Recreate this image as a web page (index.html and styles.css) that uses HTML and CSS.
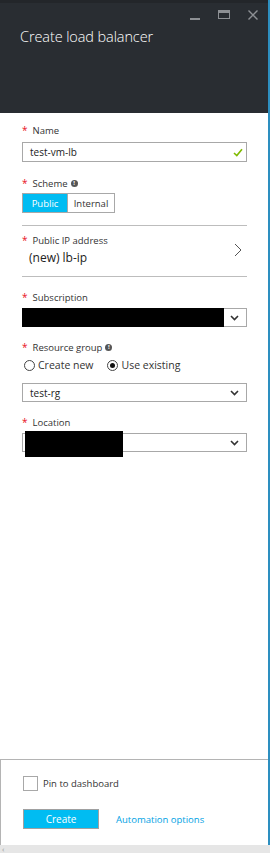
FILE: index.html
```html
<!DOCTYPE html>
<html>
<head>
<meta charset="utf-8">
<link rel="stylesheet" href="styles.css">
</head>
<body>
<div class="frame">
  <div class="panel">
    <div class="header">
      <div class="controls">
        <svg class="ctl" width="12" height="12" viewBox="0 0 12 12"><rect x="1" y="9" width="10" height="2" fill="#8d9094"/></svg>
        <svg class="ctl" width="12" height="12" viewBox="0 0 12 12"><rect x="0.5" y="1.5" width="11" height="8" fill="none" stroke="#8d9094"/><rect x="1" y="2" width="10" height="2" fill="#8d9094"/></svg>
        <svg class="ctl" width="12" height="12" viewBox="0 0 12 12"><path d="M1.5 1.5 L10.5 10.5 M10.5 1.5 L1.5 10.5" stroke="#8d9094" stroke-width="1.4"/></svg>
      </div>
      <h1 class="title">Create load balancer</h1>
    </div>
    <div class="content">
      <div class="label"><span class="req">*</span>Name</div>
      <div class="input">
        <span class="val">test-vm-lb</span>
        <svg width="10" height="9" viewBox="0 0 10 9"><path d="M1 5 L3.8 7.6 L9 1.2" fill="none" stroke="#7fba00" stroke-width="1.6"/></svg>
      </div>

      <div class="label sp1"><span class="req">*</span>Scheme<span class="info">!</span></div>
      <div class="toggle">
        <span class="opt on">Public</span><span class="opt">Internal</span>
      </div>

      <div class="sep sep1"></div>
      <div class="nav">
        <div>
          <div class="label"><span class="req">*</span>Public IP address</div>
          <div class="navval">(new) lb-ip</div>
        </div>
        <svg width="8" height="14" viewBox="0 0 8 14"><path d="M1 1 L7 7 L1 13" fill="none" stroke="#555" stroke-width="1"/></svg>
      </div>
      <div class="sep"></div>

      <div class="label sp2"><span class="req">*</span>Subscription</div>
      <div class="select">
        <div class="redact"></div>
        <div class="arrow"><svg width="9" height="6" viewBox="0 0 9 6"><path d="M1 1 L4.5 4.5 L8 1" fill="none" stroke="#333" stroke-width="1.6"/></svg></div>
      </div>

      <div class="label sp2"><span class="req">*</span>Resource group<span class="info">!</span></div>
      <div class="radios">
        <span class="radio"><span class="circle"></span>Create new</span>
        <span class="radio"><span class="circle checked"></span>Use existing</span>
      </div>
      <div class="select sp3">
        <span class="val">test-rg</span>
        <div class="arrow"><svg width="9" height="6" viewBox="0 0 9 6"><path d="M1 1 L4.5 4.5 L8 1" fill="none" stroke="#333" stroke-width="1.6"/></svg></div>
      </div>

      <div class="label sp2"><span class="req">*</span>Location</div>
      <div class="select loc">
        <div class="redact2"></div>
        <div class="arrow"><svg width="9" height="6" viewBox="0 0 9 6"><path d="M1 1 L4.5 4.5 L8 1" fill="none" stroke="#333" stroke-width="1.6"/></svg></div>
      </div>
    </div>
    <div class="footer">
      <label class="pin"><span class="box"></span>Pin to dashboard</label>
      <div class="actions">
        <button class="create">Create</button>
        <a class="auto">Automation options</a>
      </div>
    </div>
  </div>
  <div class="edge"></div>
</div>
<div class="scrollbar"><span class="lt">&lsaquo;</span></div>
</body>
</html>
```

FILE: styles.css
```css
* { box-sizing: border-box; }
html, body { margin: 0; padding: 0; }
body {
  width: 270px;
  height: 853px;
  font-family: "Open Sans", "Noto Sans", sans-serif;
  color: #333;
  background: #fff;
  overflow: hidden;
}
.frame { display: flex; height: 845px; }
.panel { width: 268px; display: flex; flex-direction: column; }
.edge { width: 2px; background: #2d8fc0; }
.header {
  height: 113px;
  background: #292d32;
  border-top: 3px solid #23262a;
  position: relative;
  padding: 24px 0 0 20px;
}
.controls {
  position: absolute;
  top: 6px;
  right: 9px;
  display: flex;
  gap: 17px;
}
.title {
  margin: 0;
  font-weight: 300;
  font-size: 14.5px;
  color: #fff;
  letter-spacing: -0.1px;
}
.content { flex: 1; padding: 11px 21px 0 22px; }
.label { font-size: 9.5px; line-height: 13px; color: #333; display: flex; align-items: center; }
.req { color: #e81123; margin-right: 5px; font-size: 10px; }
.info {
  display: inline-flex; width: 7px; height: 7px; border-radius: 50%;
  background: #555; color: #fff; font-size: 6px; font-weight: 700;
  align-items: center; justify-content: center; margin-left: 3px;
}
.input {
  margin-top: 5px;
  height: 20px;
  border: 1px solid #a8a8a8;
  display: flex; align-items: center; justify-content: space-between;
  padding: 0 3px 0 7px;
}
.val { font-size: 10px; color: #222; }
.sp1 { margin-top: 15px; }
.toggle { margin-top: 3px; display: flex; }
.opt {
  height: 20px; display: inline-flex; align-items: center; justify-content: center;
  font-size: 9.5px; border: 1px solid #a8a8a8; color: #333;
}
.opt.on { width: 46px; background: #00bcf2; color: #fff; border-color: #a8a8a8; }
.opt:not(.on) { width: 47px; border-left: none; }
.sep { height: 1px; background: #bdbdbd; }
.sep1 { margin-top: 12px; }
.nav {
  height: 50px;
  display: flex; align-items: center; justify-content: space-between;
  padding: 0 5px 2px 0;
}
.navval { font-size: 12px; margin-left: 7px; margin-top: 2px; color: #222; }
.sp2 { margin-top: 14px; }
.select {
  margin-top: 4px;
  height: 19px;
  border: 1px solid #a8a8a8;
  display: flex; align-items: center; position: relative;
  padding-left: 7px;
}
.select .val { flex: 1; }
.redact { position: absolute; left: -1px; top: -1px; width: 202px; height: 19px; background: #000; }
.redact2 { position: absolute; left: 2px; top: -3px; width: 98px; height: 26px; background: #000; }
.arrow {
  margin-left: auto; width: 24px; height: 100%;
  display: flex; align-items: center; justify-content: center;
}
.radios { display: flex; gap: 12px; margin-top: 4px; font-size: 10.5px; }
.radio { display: inline-flex; align-items: center; color: #333; }
.circle {
  width: 11px; height: 11px; border: 1px solid #444; border-radius: 50%;
  margin: 0 3px 0 2px; position: relative;
}
.circle.checked::after {
  content: ""; position: absolute; left: 2px; top: 2px; width: 5px; height: 5px;
  border-radius: 50%; background: #111;
}
.sp3 { margin-top: 11px; }
.loc { margin-top: 4px; }
.footer {
  height: 86px;
  border-top: 1px solid #b4b4b4;
  border-left: 1px solid #b4b4b4;
  padding: 16px 0 0 22px;
}
.pin { display: flex; align-items: center; font-size: 9.5px; color: #333; }
.box { width: 15px; height: 15px; border: 1px solid #a8a8a8; margin-right: 5px; }
.actions { display: flex; align-items: center; margin-top: 18px; gap: 17px; }
.create {
  width: 76px; height: 20px; background: #00bcf2; border: 1px solid #a0a0a0;
  color: #fff; font-family: inherit; font-size: 10px; padding: 0;
}
.auto { color: #00a1e4; font-size: 9.5px; }
.scrollbar {
  height: 8px; background: #e6e6e6;
  display: flex; align-items: center; padding-left: 2px;
}
.lt { font-size: 8px; line-height: 8px; color: #999; }
```
